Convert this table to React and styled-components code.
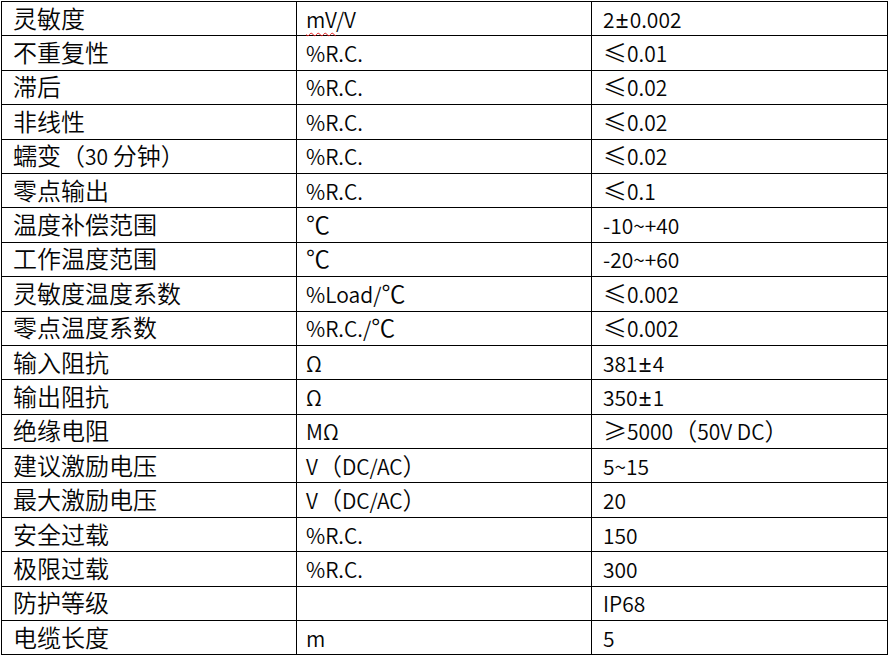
import React from 'react'
import styled, { createGlobalStyle } from 'styled-components'

const GlobalStyle = createGlobalStyle`
  html, body {
    margin: 0;
    padding: 0;
    background: #ffffff;
  }
  body {
    font-family: "Noto Sans CJK SC", "Noto Sans", sans-serif;
    color: #000;
  }
`

const Page = styled.div`
  width: 888px;
  height: 656px;
  padding: 1px 0 0 1px;
  box-sizing: border-box;
  background: #fff;
`

const Table = styled.table`
  width: 886px;
  border-collapse: collapse;
  table-layout: fixed;
`

const Row = styled.tr`
  height: 34.4px;
`

const Cell = styled.td`
  border: 1.5px solid #000;
  padding: 0 0 0 ${(p) => p.$pad || 11}px;
  font-size: 21px;
  font-weight: 350;
  line-height: 28px;
  color: #050505;
  white-space: nowrap;
  vertical-align: middle;
`

// CJK runs are set a little larger than Latin, as in the source document
const Han = styled.span`
  font-size: 24px;
  font-weight: 350;
  line-height: 1;
`

// plus-minus sign at digit width; the CJK font draws it full width
const Sign = styled.span`
  font-family: "Noto Sans", sans-serif;
  font-size: 23px;
  font-weight: 400;
  line-height: 1;
  padding: 0 1px;
`

const Spell = styled.span`
  text-decoration: underline wavy #e41b1b;
  text-decoration-thickness: 1.2px;
  text-underline-offset: 4px;
`

const rows = [
  ['灵敏度', 'mV/V', '2±0.002'],
  ['不重复性', '%R.C.', '≤0.01'],
  ['滞后', '%R.C.', '≤0.02'],
  ['非线性', '%R.C.', '≤0.02'],
  ['蠕变（30 分钟）', '%R.C.', '≤0.02'],
  ['零点输出', '%R.C.', '≤0.1'],
  ['温度补偿范围', '℃', '-10~+40'],
  ['工作温度范围', '℃', '-20~+60'],
  ['灵敏度温度系数', '%Load/℃', '≤0.002'],
  ['零点温度系数', '%R.C./℃', '≤0.002'],
  ['输入阻抗', 'Ω', '381±4'],
  ['输出阻抗', 'Ω', '350±1'],
  ['绝缘电阻', 'MΩ', '≥5000（50V DC）'],
  ['建议激励电压', 'V（DC/AC）', '5~15'],
  ['最大激励电压', 'V（DC/AC）', '20'],
  ['安全过载', '%R.C.', '150'],
  ['极限过载', '%R.C.', '300'],
  ['防护等级', '', 'IP68'],
  ['电缆长度', 'm', '5'],
]

const SPLIT_RE = /([\u2103\u2264\u2265\u3000-\u303f\u4e00-\u9fff\uff00-\uffef]+|±)/

function Text({ children }) {
  const parts = children.split(SPLIT_RE)
  return parts.map((part, i) => {
    if (i % 2 === 0) return part
    if (part === '±') return <Sign key={i}>{part}</Sign>
    return <Han key={i}>{part}</Han>
  })
}

function Unit({ unit }) {
  if (unit === 'mV/V') {
    return (
      <>
        <Spell>mV</Spell>/V
      </>
    )
  }
  return <Text>{unit}</Text>
}

export default function App() {
  return (
    <Page>
      <GlobalStyle />
      <Table>
        <colgroup>
          <col style={{ width: 295 }} />
          <col style={{ width: 295 }} />
          <col style={{ width: 296 }} />
        </colgroup>
        <tbody>
          {rows.map(([name, unit, value]) => (
            <Row key={name}>
              <Cell $pad={11}><Text>{name}</Text></Cell>
              <Cell $pad={9}><Unit unit={unit} /></Cell>
              <Cell $pad={11}><Text>{value}</Text></Cell>
            </Row>
          ))}
        </tbody>
      </Table>
    </Page>
  )
}
